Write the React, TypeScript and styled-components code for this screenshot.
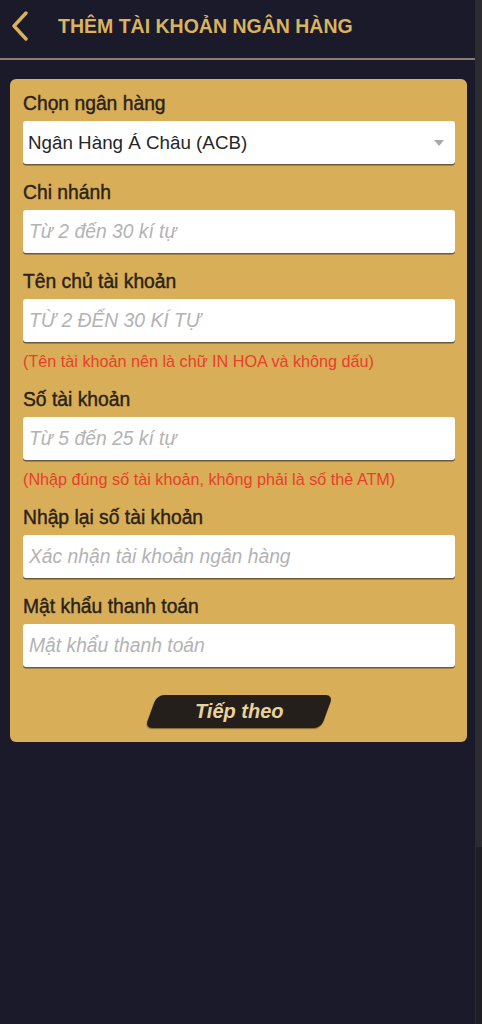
import styled, { createGlobalStyle } from "styled-components";

const GlobalStyle = createGlobalStyle`
  html, body {
    margin: 0;
    padding: 0;
    background: #1a1a2b;
  }
  * {
    box-sizing: border-box;
  }
`;

interface Field {
  label: string;
  placeholder?: string;
  value?: string;
  select?: boolean;
  note?: string;
}

const fields: Field[] = [
  { label: "Chọn ngân hàng", value: "Ngân Hàng Á Châu (ACB)", select: true },
  { label: "Chi nhánh", placeholder: "Từ 2 đến 30 kí tự" },
  {
    label: "Tên chủ tài khoản",
    placeholder: "TỪ 2 ĐẾN 30 KÍ TỰ",
    note: "(Tên tài khoản nên là chữ IN HOA và không dấu)",
  },
  {
    label: "Số tài khoản",
    placeholder: "Từ 5 đến 25 kí tự",
    note: "(Nhập đúng số tài khoản, không phải là số thẻ ATM)",
  },
  { label: "Nhập lại số tài khoản", placeholder: "Xác nhận tài khoản ngân hàng" },
  { label: "Mật khẩu thanh toán", placeholder: "Mật khẩu thanh toán" },
];

const App = () => {
  return (
    <Page>
      <GlobalStyle />
      <Main>
        <Header>
          <BackButton>
            <svg width="18" height="30" viewBox="0 0 18 30">
              <path
                d="M15 2 L3 15 L15 28"
                fill="none"
                stroke="#d9b25c"
                strokeWidth="3.4"
                strokeLinecap="round"
                strokeLinejoin="round"
              />
            </svg>
          </BackButton>
          <Title>THÊM TÀI KHOẢN NGÂN HÀNG</Title>
        </Header>

        <Card>
          {fields.map((f) => (
            <FieldGroup key={f.label}>
              <Label>{f.label}</Label>
              <InputBox>
                {f.value ? (
                  <Value>{f.value}</Value>
                ) : (
                  <Placeholder>{f.placeholder}</Placeholder>
                )}
                {f.select && <Caret />}
              </InputBox>
              {f.note && <Note>{f.note}</Note>}
            </FieldGroup>
          ))}

          <ButtonRow>
            <NextButton>
              <span>Tiếp theo</span>
            </NextButton>
          </ButtonRow>
        </Card>
      </Main>

      <ScrollTrack>
        <ScrollThumb />
      </ScrollTrack>
    </Page>
  );
};

export default App;

const Page = styled.div`
  display: flex;
  min-height: 1024px;
  background: #1a1a2b;
  font-family: "Liberation Sans", Arial, sans-serif;
`;

const Main = styled.div`
  flex: 1;
  display: flex;
  flex-direction: column;
`;

const Header = styled.div`
  height: 60px;
  display: flex;
  align-items: center;
  padding: 0 0 6px 11px;
  border-bottom: 2px solid #8c7d6c;
`;

const BackButton = styled.div`
  width: 18px;
  height: 30px;
  display: flex;
  margin-right: 29px;
`;

const Title = styled.div`
  color: #dab35f;
  font-size: 19.5px;
  font-weight: bold;
`;

const Card = styled.div`
  margin: 19px 8px 0 10px;
  background: #d9ae59;
  border-radius: 6px;
  padding: 13px 12px 14px 13px;
  display: flex;
  flex-direction: column;
  gap: 17px;
`;

const FieldGroup = styled.div`
  display: flex;
  flex-direction: column;
`;

const Label = styled.div`
  color: #2a2216;
  font-size: 19.3px;
  line-height: 24px;
  margin-bottom: 5px;
  -webkit-text-stroke: 0.4px #2a2216;
`;

const InputBox = styled.div`
  position: relative;
  height: 43px;
  background: #ffffff;
  border-radius: 3px;
  box-shadow: 0 1.5px 0 #6b5a3c;
  display: flex;
  align-items: center;
  padding: 0 5px;
`;

const Value = styled.div`
  color: #262626;
  font-size: 18.8px;
`;

const Placeholder = styled.div`
  color: #b3b3b3;
  font-size: 19.3px;
  font-style: italic;
  padding-left: 1px;
`;

const Caret = styled.div`
  position: absolute;
  right: 11px;
  top: 19px;
  width: 0;
  height: 0;
  border-left: 5px solid transparent;
  border-right: 5px solid transparent;
  border-top: 6px solid #a9a9a9;
`;

const Note = styled.div`
  color: #e8402a;
  font-size: 16.2px;
  line-height: 20px;
  margin-top: 9px;
`;

const ButtonRow = styled.div`
  display: flex;
  justify-content: center;
  padding-top: 11px;
`;

const NextButton = styled.div`
  width: 176px;
  height: 33px;
  background: #241f1b;
  border-radius: 7px;
  transform: skewX(-20deg);
  display: flex;
  align-items: center;
  justify-content: center;
  box-shadow: 0 1px 1px rgba(0, 0, 0, 0.4);

  span {
    transform: skewX(20deg);
    color: #e9d29c;
    font-size: 20px;
    font-weight: bold;
    font-style: italic;
  }
`;

const ScrollTrack = styled.div`
  width: 7px;
  background: #1d1d22;
  border-left: 1px solid #2c2c30;
  display: flex;
  flex-direction: column;
`;

const ScrollThumb = styled.div`
  height: 847px;
  background: #2b2b30;
`;
